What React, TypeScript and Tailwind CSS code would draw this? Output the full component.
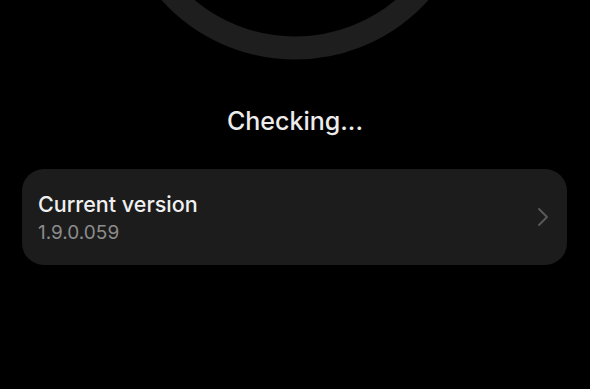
import React from "react";

export default function App() {
  return (
    <div
      className="w-[590px] h-[389px] bg-black overflow-hidden flex flex-col"
      style={{ fontFamily: "Inter, 'Noto Sans', 'Liberation Sans', sans-serif" }}
    >
      <svg width="590" height="64" viewBox="0 0 590 64" className="block shrink-0">
        <circle cx="295" cy="-120" r="168" fill="none" stroke="#1e1e1e" strokeWidth="23" />
      </svg>
      <div className="mt-[41px] text-center text-[25px] leading-[32px] text-[#ececec] font-medium">
        Checking...
      </div>
      <div className="mt-[32px] ml-[22px] mr-[23px] h-[96px] rounded-[22px] bg-[#1c1c1c] flex items-center justify-between pl-[16px] pr-[17px]">
        <div className="flex flex-col">
          <span className="text-[21.5px] leading-[28px] text-[#f0f0f0] font-medium">Current version</span>
          <span className="text-[19px] leading-[24px] text-[#8c8c8c] mt-[3px]">1.9.0.059</span>
        </div>
        <svg width="14" height="22" viewBox="0 0 14 22" className="block">
          <path d="M3 3 L11 11 L3 19" fill="none" stroke="#585858" strokeWidth="2" strokeLinecap="round" strokeLinejoin="round" />
        </svg>
      </div>
    </div>
  );
}
